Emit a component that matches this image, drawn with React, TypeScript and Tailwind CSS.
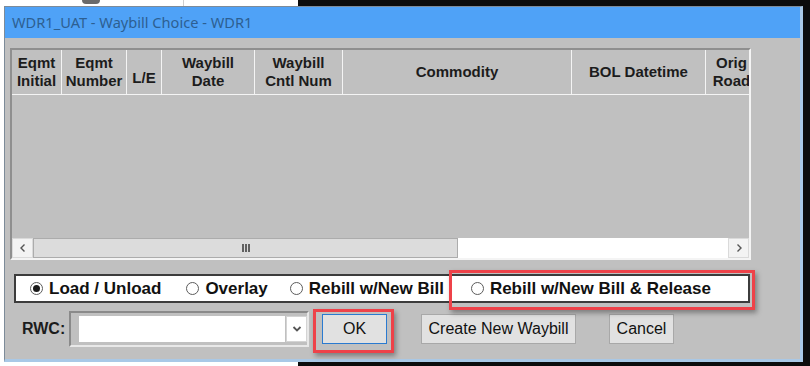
import React from 'react';

const cols = [
  { w: 'w-[50px]', lines: ['Eqmt', 'Initial'] },
  { w: 'w-[65px]', lines: ['Eqmt', 'Number'] },
  { w: 'w-[35px]', lines: ['L/E'], bottom: true },
  { w: 'w-[93px]', lines: ['Waybill', 'Date'] },
  { w: 'w-[88px]', lines: ['Waybill', 'Cntl Num'] },
  { w: 'w-[229px]', lines: ['Commodity'] },
  { w: 'w-[134px]', lines: ['BOL Datetime'] },
  { w: 'w-[52px]', lines: ['Orig', 'Road'] },
];

function Radio({ checked }: { checked?: boolean }) {
  return (
    <span className="w-[13px] h-[13px] rounded-full border border-[#5c5c5c] bg-white flex items-center justify-center shrink-0">
      {checked && <span className="w-[7px] h-[7px] rounded-full bg-[#1a1a1a]" />}
    </span>
  );
}

function Option({ label, checked, className }: { label: string; checked?: boolean; className?: string }) {
  return (
    <div className={`flex items-center gap-[6px] ${className ?? ''}`}>
      <Radio checked={checked} />
      <span className="font-bold text-[17px] leading-none text-[#111]">{label}</span>
    </div>
  );
}

export default function App() {
  return (
    <div
      className="relative w-[810px] h-[366px] bg-[#0c0c0c] overflow-hidden"
      style={{ fontFamily: '"Liberation Sans", Arial, sans-serif' }}
    >
      {/* desktop behind the dialog */}
      <div className="absolute left-0 top-0 w-[298px] h-[366px] bg-white" />
      <div className="absolute left-[183px] top-0 w-px h-[6px] bg-[#cfcfcf]" />
      <div className="absolute left-[82px] top-0 w-[18px] h-[4px] rounded-b bg-[#6a6a6a]" />

      {/* dialog window */}
      <div className="absolute left-[4px] top-[6px] w-[799px] h-[356px] flex flex-col border-l border-t border-l-[#7d8b99] border-t-[#7d8b99] border-r-[3px] border-b-[3px] border-r-[#a9c8e6] border-b-[#a9c8e6]">
        <div className="h-[31px] shrink-0 bg-[#4fa2f7] flex items-center pl-[7px]">
          <span
            className="text-[14.6px] text-[#2d5f91]"
            style={{ fontFamily: '"Noto Sans", "Open Sans", sans-serif' }}
          >
            WDR1_UAT - Waybill Choice - WDR1
          </span>
        </div>

        <div className="relative flex-1 bg-[#c0c0c0] flex flex-col">
          {/* grid */}
          <div className="mt-[10px] ml-[5px] w-[741px] h-[212px] flex flex-col border-t-2 border-l-2 border-t-[#8f8f8f] border-l-[#8f8f8f] border-r-2 border-b-2 border-r-[#f4f4f4] border-b-[#f4f4f4] overflow-hidden">
            <div className="h-[45px] shrink-0 flex border-b border-[#f4f4f4] overflow-hidden">
              {cols.map((c, i) => (
                <div
                  key={i}
                  className={`${c.w} shrink-0 h-full flex flex-col items-center ${c.bottom ? 'justify-end pb-[7px]' : 'justify-center'} border-r border-[#f4f4f4] font-bold text-[15px] leading-[18px] text-[#1c1c1c]`}
                >
                  {c.lines.map((l) => (
                    <span key={l} className="whitespace-nowrap">{l}</span>
                  ))}
                </div>
              ))}
            </div>
            <div className="flex-1" />
            <div className="h-[20px] shrink-0 flex">
              <div className="w-[21px] bg-[#f3f3f3] border border-[#dadada] flex items-center justify-center">
                <svg width="8" height="10" viewBox="0 0 8 10">
                  <polyline points="5.5,1.5 2,5 5.5,8.5" fill="none" stroke="#555" strokeWidth="1.4" />
                </svg>
              </div>
              <div className="w-[425px] bg-[#dcdcdc] border border-[#acacac] flex items-center justify-center gap-[1px]">
                <span className="w-[2px] h-[8px] bg-[#606060]" />
                <span className="w-[2px] h-[8px] bg-[#606060]" />
                <span className="w-[2px] h-[8px] bg-[#606060]" />
              </div>
              <div className="w-[270px] bg-white" />
              <div className="w-[21px] bg-[#f3f3f3] border border-[#dadada] flex items-center justify-center">
                <svg width="8" height="10" viewBox="0 0 8 10">
                  <polyline points="2.5,1.5 6,5 2.5,8.5" fill="none" stroke="#555" strokeWidth="1.4" />
                </svg>
              </div>
            </div>
          </div>

          {/* mode options */}
          <div className="mt-[14px] ml-[9px] w-[736px] h-[29px] bg-white border-2 border-[#3c3c3c] flex items-center pl-[14px]">
            <Option label="Load / Unload" checked />
            <Option label="Overlay" className="ml-[25px]" />
            <Option label="Rebill w/New Bill" className="ml-[22px]" />
            <Option label="Rebill w/New Bill & Release" className="ml-[27px]" />
          </div>

          {/* bottom row */}
          <div className="mt-[8px] h-[36px] flex items-center">
            <span className="ml-[17px] w-[47px] font-bold text-[16px] text-[#1c1c1c]">RWC:</span>
            <div className="w-[240px] h-[36px] flex items-center border-2 border-t-[#8a8a8a] border-l-[#8a8a8a] border-r-[#e8e8e8] border-b-[#e8e8e8] pl-[8px]">
              <div className="w-[206px] h-[26px] bg-white" />
              <div className="w-[21px] h-[26px] ml-px bg-white border border-[#d4d4d4] flex items-center justify-center">
                <svg width="10" height="8" viewBox="0 0 10 8">
                  <polyline points="1.5,2 5,5.5 8.5,2" fill="none" stroke="#555" strokeWidth="1.8" />
                </svg>
              </div>
            </div>
            <button className="ml-[13px] w-[65px] h-[30px] bg-[#e1e1e1] border border-[#2a7ad0] text-[16px] text-[#111]">
              OK
            </button>
            <button className="ml-[34px] w-[155px] h-[30px] bg-[#e1e1e1] border border-[#a8a8a8] text-[16px] text-[#111]">
              Create New Waybill
            </button>
            <button className="ml-[33px] w-[65px] h-[30px] bg-[#e1e1e1] border border-[#a8a8a8] text-[16px] text-[#111]">
              Cancel
            </button>
          </div>

          {/* red annotation boxes */}
          <div className="absolute left-[444px] top-[232px] w-[306px] h-[40px] border-[3px] border-[#ee4249] shadow-[2px_3px_5px_rgba(0,0,0,0.35)]" />
          <div className="absolute left-[308px] top-[271px] w-[81px] h-[44px] border-[3px] border-[#ee4249] shadow-[2px_3px_5px_rgba(0,0,0,0.35)]" />
        </div>
      </div>
    </div>
  );
}
